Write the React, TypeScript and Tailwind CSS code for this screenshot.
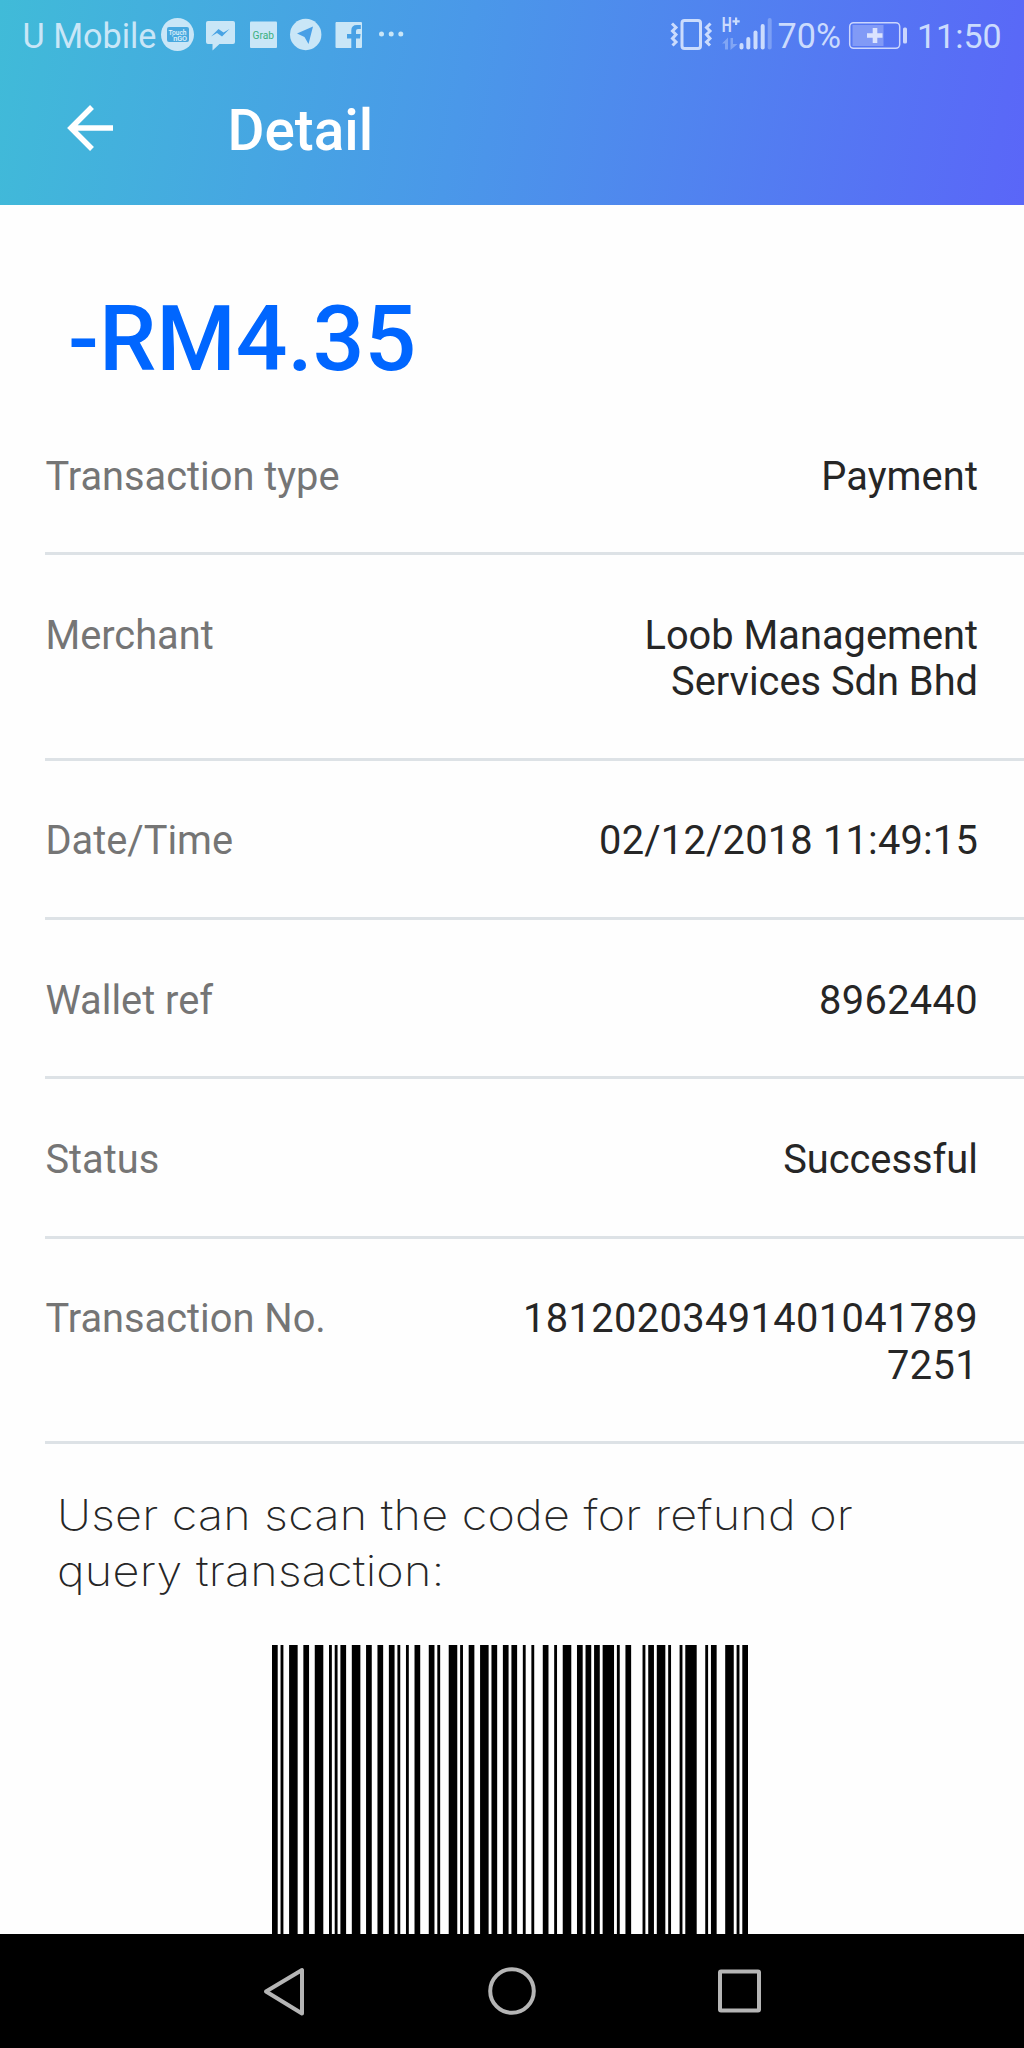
import React from "react";

type IRow = {
  label: string;
  value: React.ReactNode;
  tracking?: string;
};

const rows: IRow[] = [
  { label: "Transaction type", value: "Payment", tracking: "tracking-[0.1px]" },
  {
    label: "Merchant",
    value: (
      <>
        Loob Management
        <br />
        Services Sdn Bhd
      </>
    ),
  },
  { label: "Date/Time", value: "02/12/2018 11:49:15", tracking: "tracking-[0.2px]" },
  { label: "Wallet ref", value: "8962440", tracking: "tracking-[0.35px]" },
  { label: "Status", value: "Successful" },
  { label: "Transaction No.", value: "181202034914010417897251", tracking: "tracking-[0.38px]" },
];

// Code 128 (set C) bar/space widths: start, 12 digit pairs, check, stop
const symbols = [
  "211232",
  "223211",
  "112232",
  "222221",
  "121223",
  "211331",
  "122231",
  "222122",
  "121322",
  "123221",
  "212141",
  "122411",
  "213113",
  "114311",
  "2331112",
];

function Barcode() {
  const bars: { x: number; w: number }[] = [];
  let x = 0;
  symbols
    .join("")
    .split("")
    .forEach((n, i) => {
      if (i % 2 === 0) bars.push({ x, w: Number(n) });
      x += Number(n);
    });

  return (
    <svg className="ml-[272.400px] h-[292px] w-[476px]" viewBox={`0 0 ${x} 100`} preserveAspectRatio="none">
      {bars.map((b) => (
        <rect key={b.x} x={b.x} y="0" width={b.w} height="100" fill="#000" />
      ))}
    </svg>
  );
}

function NotificationIcons() {
  return (
    <svg className="h-[70px] w-[260px] shrink-0" viewBox="158 0 260 70" fill="#c9e6f7">
      {/* Touch 'n Go */}
      <circle cx="177.5" cy="34.5" r="16.5" />
      <rect x="167" y="27" width="22" height="15" rx="2" fill="#48a9e0" />
      <g fill="#e3f3fb" fontFamily="Roboto, sans-serif" fontWeight="500" fontSize="7.5">
        <text x="168.5" y="34.5" textLength="18" lengthAdjust="spacingAndGlyphs">Touch</text>
        <text x="172" y="40.5" textLength="15" lengthAdjust="spacingAndGlyphs">'nGO</text>
      </g>
      {/* Messenger */}
      <path d="M208 21h25q2 0 2 2v19q0 2-2 2h-13.500l-7 6.500v-6.500H208q-2 0-2-2V23q0-2 2-2z" />
      <path d="M211 36.500l7.500-7.500 5 3.500 6-3.500-7.500 7.500-5-3.500z" fill="#48a3e4" />
      {/* Grab */}
      <rect x="250" y="21.500" width="27" height="26.500" rx="1" />
      <text x="252.500" y="38.800" textLength="21.500" lengthAdjust="spacingAndGlyphs" fill="#39b080" fontFamily="Roboto, sans-serif" fontSize="10">Grab</text>
      {/* Telegram */}
      <circle cx="305.700" cy="34.500" r="15.700" />
      <path d="M297 33.500l16-7-4.500 17.500-4-7z" fill="#489fe6" />
      {/* Facebook */}
      <path d="M336 22h25a1 1 0 0 1 1 1v24a1 1 0 0 1-1 1h-5V38.500h4l.6-4.500h-4.600v-3q0-2 2-2h2.800v-4h-4q-5.500 0-5.500 5.500V34H347v4.500h4.300V48H336.500a1 1 0 0 1-1-1V23z" />
      <circle cx="381.500" cy="34" r="2.500" />
      <circle cx="391.200" cy="34" r="2.500" />
      <circle cx="400.800" cy="34" r="2.500" />
    </svg>
  );
}

function SignalIcons() {
  return (
    <svg className="h-[70px] w-[108px] shrink-0" viewBox="668 0 108 70" fill="#cbdcfd">
      {/* vibrate */}
      <g fill="none" stroke="#cbdcfd" strokeWidth="3">
        <rect x="682" y="20.500" width="18.500" height="28" rx="2.500" />
        <path d="M672 23.500l4 4-3.500 3.500 3.500 3.500-3.500 4 3.500 3.500-3.500 3.500" />
        <path d="M710.500 23.500l-4 4 3.500 3.500-3.500 3.500 3.500 4-3.500 3.500 3.500 3.500" />
      </g>
      {/* network type */}
      <text x="721.800" y="32.300" fontFamily="Roboto, sans-serif" fontWeight="700" fontSize="19.500" textLength="10" lengthAdjust="spacingAndGlyphs">H</text>
      <path d="M735 17.500h2.200v2.700h2.500v2.200h-2.500v2.700H735v-2.700h-2.500v-2.200h2.500z" />
      <path d="M722 43.500l6-6V49.500h-3v-6zM730.500 38h2.500v6h4.500l-7 6z" opacity=".4" />
      {/* bars */}
      <rect x="739.500" y="43" width="4" height="6.500" rx="2" />
      <rect x="746.300" y="37" width="4" height="12.500" rx="2" />
      <rect x="753.500" y="30.500" width="4" height="19" rx="2" />
      <rect x="760.700" y="24" width="4" height="25.500" rx="2" />
      <rect x="767.700" y="18" width="4" height="31.500" rx="2" opacity=".35" />
    </svg>
  );
}

function BatteryIcon() {
  return (
    <svg className="h-[70px] w-[62px] shrink-0" viewBox="846 0 62 70">
      <rect x="849.700" y="22.700" width="50" height="25.600" rx="4" fill="none" stroke="#cbd6fd" strokeWidth="1.500" />
      <rect x="852.500" y="25" width="31" height="21" fill="#cbd6fd" opacity=".38" />
      <path d="M872.700 28h4.600v5.200h5.200v4.600h-5.200V43h-4.600v-5.200h-5.700v-4.600h5.700z" fill="#dbe3fe" />
      <rect x="903" y="27.500" width="4" height="16" rx="1.500" fill="#cbd6fd" />
    </svg>
  );
}

const StatusBar = () => {
  return (
    <div className="flex h-[70px] items-center pl-[22.500px] pr-[23.500px] text-[34.200px] leading-none text-[#c9e6f7]">
      <span className="w-[135.500px] whitespace-nowrap pt-[1.500px]">U Mobile</span>
      <NotificationIcons />
      <div className="ml-auto flex items-center text-[#cbdbfd]">
        <SignalIcons />
        <span className="w-[70px] whitespace-nowrap pl-[1.500px] pt-[2px]">70%</span>
        <BatteryIcon />
        <span className="ml-[9px] w-[83.500px] whitespace-nowrap pt-[1.500px] text-[34px]">11:50</span>
      </div>
    </div>
  );
};

const NavBar = () => {
  return (
    <div className="h-[114px] shrink-0 bg-black">
      <svg className="h-[114px] w-[1024px]" viewBox="0 1934 1024 114" fill="none" stroke="#b5b5b5" strokeWidth="4" strokeLinejoin="round">
        <path d="M266 1991.500L302 1970v43.500z" />
        <circle cx="512" cy="1991" r="21.800" />
        <rect x="720" y="1971.500" width="39" height="39" rx="1" />
      </svg>
    </div>
  );
};

const App = () => {
  return (
    <div className="flex h-[2048px] w-[1024px] flex-col overflow-hidden bg-[#fefefe] font-[Roboto,sans-serif]">
      <header className="h-[204.500px] shrink-0 bg-[linear-gradient(100deg,#40bbd8_0%,#4a98e9_45%,#5a66f8_100%)]">
        <StatusBar />
        <div className="flex items-start pt-[28px]">
          <svg className="ml-[67px] mt-[7px] h-[46px] w-[47px]" viewBox="0 0 47 46" fill="none" stroke="#fff" strokeWidth="5.500">
            <path d="M46 23H4M25 2L4 23l21 21" />
          </svg>
          <h1 className="ml-[113.500px] text-[56.700px] font-medium leading-[66px] text-white">Detail</h1>
        </div>
      </header>

      <main className="min-h-0 flex-1 overflow-hidden">
        <p className="ml-[68px] mt-[81px] text-[91px] font-medium leading-[107px] text-[#0066ff]">-RM4.35</p>
        <div className="mt-[3.500px]">
          {rows.map((row) => (
            <div
              key={row.label}
              className="ml-[45.400px] flex justify-between border-b-3 border-[#dde2e6] pb-[52.100px] pr-[46px] pt-[57.500px] text-[39.800px] leading-[46.600px]"
            >
              <span className="text-[#757575]">{row.label}</span>
              <span className={`w-[458px] wrap-anywhere pl-0.5 text-right text-[#262626] ${row.tracking ?? ""}`}>
                {row.value}
              </span>
            </div>
          ))}
        </div>
        <p className="ml-[57px] mt-[43px] origin-left scale-x-[1.1] whitespace-nowrap font-[Inter,sans-serif] text-[42.500px] font-extralight leading-[55.500px] tracking-[0.2px] text-[#262626]">
          User can scan the code for refund or
          <br />
          query transaction:
        </p>
        <div className="mt-[47px]">
          <Barcode />
        </div>
      </main>

      <NavBar />
    </div>
  );
};

export default App;
